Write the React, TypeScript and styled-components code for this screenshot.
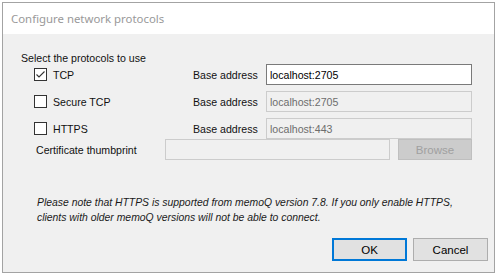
import React, { useState } from "react";
import styled, { createGlobalStyle } from "styled-components";

const GlobalStyle = createGlobalStyle`
  html, body {
    margin: 0;
    padding: 0;
    background: #ffffff;
  }
  body {
    font-family: "Liberation Sans", Arial, sans-serif;
  }
`;

const Window = styled.div`
  margin: 2px 0 0 2px;
  width: 493px;
  height: 271px;
  box-sizing: border-box;
  border: 1px solid #a3a3a3;
  display: flex;
  flex-direction: column;
  background: #f0f0f0;
`;

const TitleBar = styled.div`
  height: 31px;
  flex-shrink: 0;
  background: #ffffff;
  display: flex;
  align-items: center;
  padding-left: 8px;
  font-family: "Noto Sans", "Open Sans", sans-serif;
  font-size: 11.4px;
  color: #999999;
`;

const Body = styled.div`
  flex: 1;
  display: flex;
  flex-direction: column;
  padding: 18px 6px 0 18px;
  font-size: 10.6px;
  color: #111111;
`;

const Heading = styled.div`
  line-height: 12px;
  height: 12px;
`;

const ProtocolGrid = styled.div`
  margin-left: 13px;
  display: grid;
  grid-template-columns: 159px 73px 206px;
  grid-auto-rows: 21px;
  row-gap: 6px;
  align-items: center;
`;

const CheckLabel = styled.label`
  display: flex;
  align-items: center;
  gap: 6px;
`;

const Box = styled.span`
  width: 13px;
  height: 13px;
  box-sizing: border-box;
  border: 1px solid #333333;
  background: #ffffff;
  display: flex;
  align-items: center;
  justify-content: center;
`;

const TextBox = styled.div<{ $disabled?: boolean }>`
  height: 21px;
  box-sizing: border-box;
  border: 1px solid ${({ $disabled }) => ($disabled ? "#cccccc" : "#7a7a7a")};
  background: ${({ $disabled }) => ($disabled ? "#f0f0f0" : "#ffffff")};
  color: ${({ $disabled }) => ($disabled ? "#6d6d6d" : "#000000")};
  padding-left: 3px;
  display: flex;
  align-items: center;
`;

const CertRow = styled.div`
  margin: 0 0 0 15px;
  display: flex;
  align-items: center;
  height: 21px;
`;

const CertLabel = styled.div`
  width: 129px;
`;

const CertInput = styled(TextBox)`
  width: 225px;
`;

const WinButton = styled.div<{ $variant: "default" | "normal" | "disabled" }>`
  width: 75px;
  height: 23px;
  box-sizing: border-box;
  display: flex;
  align-items: center;
  justify-content: center;
  font-size: 11.5px;
  background: ${({ $variant }) => ($variant === "disabled" ? "#cccccc" : "#e1e1e1")};
  color: ${({ $variant }) => ($variant === "disabled" ? "#a0a0a0" : "#000000")};
  border: ${({ $variant }) =>
    $variant === "default"
      ? "2px solid #0078d7"
      : $variant === "disabled"
      ? "1px solid #bfbfbf"
      : "1px solid #adadad"};
`;

const BrowseButton = styled(WinButton)`
  margin-left: 8px;
  height: 21px;
  width: 74px;
`;

const Note = styled.p`
  margin: 35px 0 0 16px;
  font-size: 10.4px;
  font-style: italic;
  line-height: 15px;
  color: #1a1a1a;
`;

const ButtonRow = styled.div`
  margin-top: 13px;
  display: flex;
  justify-content: flex-end;
  gap: 6px;
`;

const protocols = [
  { name: "TCP", address: "localhost:2705", enabled: true },
  { name: "Secure TCP", address: "localhost:2705", enabled: false },
  { name: "HTTPS", address: "localhost:443", enabled: false },
];

function CheckBox({ checked }: { checked: boolean }) {
  return (
    <Box>
      {checked && (
        <svg width="11" height="11" viewBox="0 0 11 11">
          <path d="M1.5 5.5 L4 8 L9.5 2.5" fill="none" stroke="#333" strokeWidth="1.1" />
        </svg>
      )}
    </Box>
  );
}

export default function App() {
  const [items] = useState(protocols);

  return (
    <>
      <GlobalStyle />
      <Window>
        <TitleBar>Configure network protocols</TitleBar>
        <Body>
          <Heading>Select the protocols to use</Heading>
          <ProtocolGrid>
            {items.map((p) => (
              <React.Fragment key={p.name}>
                <CheckLabel>
                  <CheckBox checked={p.enabled} />
                  {p.name}
                </CheckLabel>
                <span>Base address</span>
                <TextBox $disabled={!p.enabled}>{p.address}</TextBox>
              </React.Fragment>
            ))}
          </ProtocolGrid>
          <CertRow>
            <CertLabel>Certificate thumbprint</CertLabel>
            <CertInput $disabled />
            <BrowseButton $variant="disabled">Browse</BrowseButton>
          </CertRow>
          <Note>
            Please note that HTTPS is supported from memoQ version 7.8. If you only enable HTTPS,
            <br />
            clients with older memoQ versions will not be able to connect.
          </Note>
          <ButtonRow>
            <WinButton $variant="default">OK</WinButton>
            <WinButton $variant="normal">Cancel</WinButton>
          </ButtonRow>
        </Body>
      </Window>
    </>
  );
}
